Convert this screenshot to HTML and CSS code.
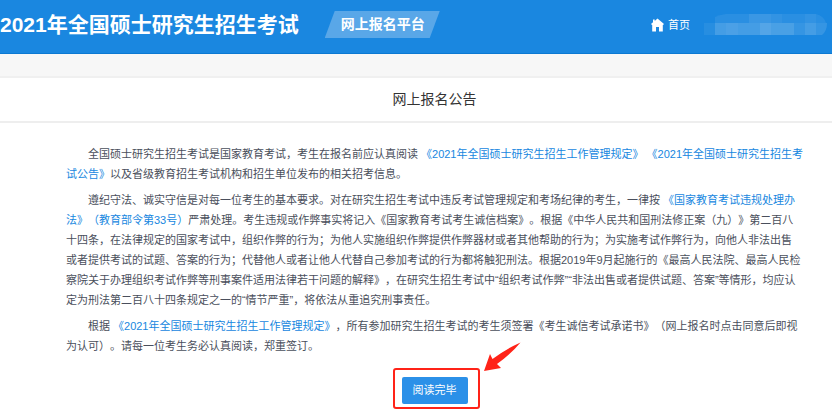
FILE: index.html
```html
<!DOCTYPE html>
<html lang="zh-CN">
<head>
<meta charset="utf-8">
<meta name="viewport" content="width=device-width, initial-scale=1">
<title>网上报名公告</title>
<link rel="stylesheet" href="styles.css">
</head>
<body>
<header class="topbar">
  <h1 class="brand">2021年全国硕士研究生招生考试</h1>
  <span class="platform">网上报名平台</span>
  <nav class="nav">
    <a class="home" href="#">
      <svg class="home-icon" viewBox="0 0 13 14" aria-hidden="true"><path d="M6.500 0.500 13 6l-1 1-.2-.1V13.500H8V9H5v4.500H1.200V6.900L1 7 0 6 2 4.300V1.500h1.700v1.400z"/></svg>
      <span>首页</span>
    </a>
    <svg class="account" viewBox="0 0 123 22" aria-hidden="true">
      <g fill="#fff">
        <path d="M11 9V3q4-2 11-3h90q8 2 10 9z" opacity=".07"/>
        <rect x="45" width="22" height="9" opacity=".08"/>
        <rect x="67" width="11" height="9" opacity=".04"/>
        <rect x="101" width="11" height="9" opacity=".04"/>
        <rect y="9" width="11" height="12" opacity=".06"/>
        <path d="M11 9h112q0 8-5 12H11z" opacity=".12"/>
        <rect x="11" y="9" width="79" height="12" opacity=".08"/>
        <rect x="22" y="9" width="12" height="12" opacity=".04"/>
        <rect x="56" y="9" width="11" height="12" opacity=".09"/>
        <rect x="67" y="9" width="23" height="12" opacity=".03"/>
        <rect x="101" y="9" width="11" height="12" opacity=".08"/>
      </g>
    </svg>
  </nav>
</header>
<main>
  <h2 class="page-title">网上报名公告</h2>
  <article class="notice">
    <div class="notice-text">
      <p>全国硕士研究生招生考试是国家教育考试，考生在报名前应认真阅读 <a href="#">《2021年全国硕士研究生招生工作管理规定》</a> <a href="#">《2021年全国硕士研究生招生考<br>试公告》</a>以及省级教育招生考试机构和招生单位发布的相关招考信息。</p>
      <p>遵纪守法、诚实守信是对每一位考生的基本要求。对在研究生招生考试中违反考试管理规定和考场纪律的考生，一律按 <a href="#">《国家教育考试违规处理办<br>法》（教育部令第33号）</a>严肃处理。考生违规或作弊事实将记入《国家教育考试考生诚信档案》。根据《中华人民共和国刑法修正案（九）》第二百八<br>十四条，在法律规定的国家考试中，组织作弊的行为；为他人实施组织作弊提供作弊器材或者其他帮助的行为；为实施考试作弊行为，向他人非法出售<br>或者提供考试的试题、答案的行为；代替他人或者让他人代替自己参加考试的行为都将触犯刑法。根据2019年9月起施行的《最高人民法院、最高人民检<br>察院关于办理组织考试作弊等刑事案件适用法律若干问题的解释》，在研究生招生考试中“组织考试作弊”“非法出售或者提供试题、答案”等情形，均应认<br>定为刑法第二百八十四条规定之一的“情节严重”，将依法从重追究刑事责任。</p>
      <p>根据 <a href="#">《2021年全国硕士研究生招生工作管理规定》</a>，所有参加研究生招生考试的考生须签署《考生诚信考试承诺书》（网上报名时点击同意后即视<br>为认可）。请每一位考生务必认真阅读，郑重签订。</p>
    </div>
    <div class="action">
      <button class="done" type="button">阅读完毕</button>
      <svg class="arrow" viewBox="0 0 37 30" aria-hidden="true"><path d="M36.500 0.500Q22 7 8.500 17L6 12 0 29l17-3-4-4Q27 12 36.500 0.500z"/></svg>
    </div>
  </article>
</main>
</body>
</html>
```
FILE: styles.css
```css
* {
  box-sizing: border-box;
}

body {
  margin: 0;
  background: #fff;
  color: #4a4f5c;
  font-family: "Liberation Sans", "Noto Sans CJK SC", sans-serif;
  font-size: 11px;
  text-spacing-trim: space-all;
}

a {
  color: #1787e0;
  text-decoration: none;
}

.topbar {
  display: flex;
  align-items: center;
  height: 54px;
  padding: 0 5px 4px 0;
  background: #1a87e0;
  border-bottom: 1px solid #0c79d2;
  color: #fff;
}

.brand {
  margin: 0;
  font-size: 21px;
  line-height: 30px;
  white-space: nowrap;
}

.platform {
  margin-left: 26px;
  padding: 0 15px 0 16px;
  background: #59a7e8;
  clip-path: polygon(10px 0, 100% 0, calc(100% - 10px) 100%, 0 100%);
  font-size: 14px;
  font-weight: bold;
  line-height: 27px;
  white-space: nowrap;
}

.nav {
  display: flex;
  align-items: center;
  gap: 14px;
  margin-left: auto;
}

.home {
  display: flex;
  align-items: center;
  gap: 4px;
  color: #fff;
  line-height: 20px;
}

.home-icon {
  width: 13px;
  height: 14px;
  fill: #fff;
}

.account {
  width: 123px;
  height: 22px;
}

main {
  border-top: 22px solid #f7f7f7;
}

.page-title {
  margin: 0;
  padding-left: 37px;
  border-top: 2px solid #f0f0f0;
  border-bottom: 2px solid #eee;
  color: #333;
  font-size: 14px;
  font-weight: normal;
  line-height: 43px;
  text-align: center;
}

.notice {
  display: flex;
  flex-direction: column;
  align-items: center;
  padding: 21px 0 7px 37px;
}

.notice-text {
  line-height: 20px;
  white-space: nowrap;
}

.notice-text p {
  margin: 0 0 6px;
  text-indent: 2em;
}

.notice-text p:last-child {
  margin-bottom: 0;
}

.action {
  position: relative;
  margin: 12px 0 0 3px;
  padding: 7px 10px 3px 7px;
  border: 2px solid #ff2318;
  border-radius: 3px;
}

.done {
  display: block;
  padding: 0 11px;
  border: 0;
  border-radius: 2px;
  background: #2b90e8;
  color: #fff;
  font: inherit;
  line-height: 27px;
}

.arrow {
  position: absolute;
  left: 100%;
  bottom: 100%;
  width: 37px;
  height: 30px;
  margin: 0 0 -2px 6px;
  fill: #ff2318;
}
```
